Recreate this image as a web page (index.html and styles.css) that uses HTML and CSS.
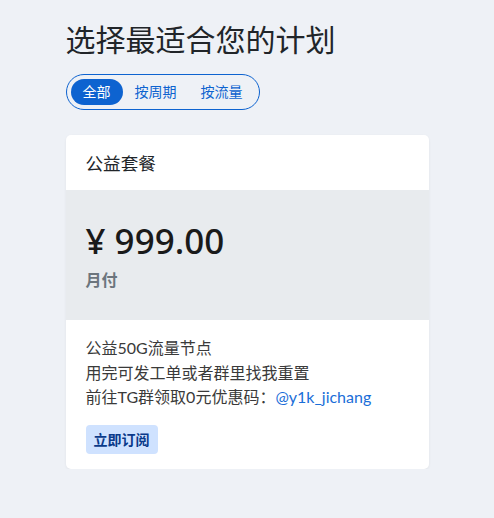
FILE: index.html
```html
<!DOCTYPE html>
<html lang="zh">
<head>
<meta charset="utf-8">
<link rel="stylesheet" href="styles.css">
</head>
<body>
<main class="page">
  <h1 class="title">选择最适合您的计划</h1>
  <div class="tabs">
    <button class="tab active">全部</button>
    <button class="tab">按周期</button>
    <button class="tab">按流量</button>
  </div>
  <section class="card">
    <div class="card-head">公益套餐</div>
    <div class="card-price">
      <div class="price">¥ 999.00</div>
      <div class="period">月付</div>
    </div>
    <div class="card-body">
      <p class="desc">公益50G流量节点<br>用完可发工单或者群里找我重置<br>前往TG群领取0元优惠码：<a class="link">@y1k_jichang</a></p>
      <button class="subscribe">立即订阅</button>
    </div>
  </section>
</main>
</body>
</html>
```
FILE: styles.css
```css
* { box-sizing: border-box; }
html, body { margin: 0; }
body {
  background: #eef1f6;
  font-family: "Noto Sans", "Noto Sans CJK SC", sans-serif;
  color: #212529;
}
.page {
  width: 363px;
  margin: 0 auto;
  padding-top: 18px;
}
.title {
  margin: 0;
  font-size: 30px;
  font-weight: 400;
  line-height: 44px;
  color: #212529;
}
.tabs {
  display: inline-flex;
  gap: 0;
  margin-top: 12px;
  padding: 4px;
  border: 1px solid #0d63d0;
  border-radius: 18px;
  height: 36px;
}
.tab {
  border: 0;
  background: transparent;
  font-family: inherit;
  font-size: 14px;
  color: #0d63d0;
  padding: 0 12px;
  height: 26px;
  border-radius: 13px;
  line-height: 26px;
}
.tab.active {
  background: #0d63d0;
  color: #fff;
}
.card {
  margin-top: 25px;
  background: #fff;
  border-radius: 5px;
  box-shadow: 0 1px 3px rgba(0,0,0,0.06);
  overflow: hidden;
}
.card-head {
  height: 55px;
  padding: 0 20px;
  display: flex;
  align-items: center;
  font-size: 17.6px;
}
.card-price {
  height: 130px;
  background: #e8ebee;
  padding: 27px 20px 0;
}
.price {
  font-size: 35px;
  line-height: 48px;
  font-weight: 500;
  color: #1a1a1a;
}
.period {
  margin-top: 4px;
  font-size: 16px;
  font-weight: 600;
  color: #6c757d;
  line-height: 22px;
}
.card-body {
  padding: 16px 20px 15px;
}
.desc {
  margin: 0;
  font-family: "Lato", "Noto Sans CJK SC", sans-serif;
  font-size: 16px;
  line-height: 24.5px;
  color: #3a3a3a;
}
.link { color: #1a6ed8; }
.subscribe {
  margin-top: 15px;
  border: 0;
  border-radius: 4px;
  background: #cfe2ff;
  color: #0a3a8a;
  font-family: "Noto Sans", "Noto Sans CJK SC", sans-serif;
  font-size: 14px;
  font-weight: 700;
  height: 29px;
  padding: 0 8px;
}
```
